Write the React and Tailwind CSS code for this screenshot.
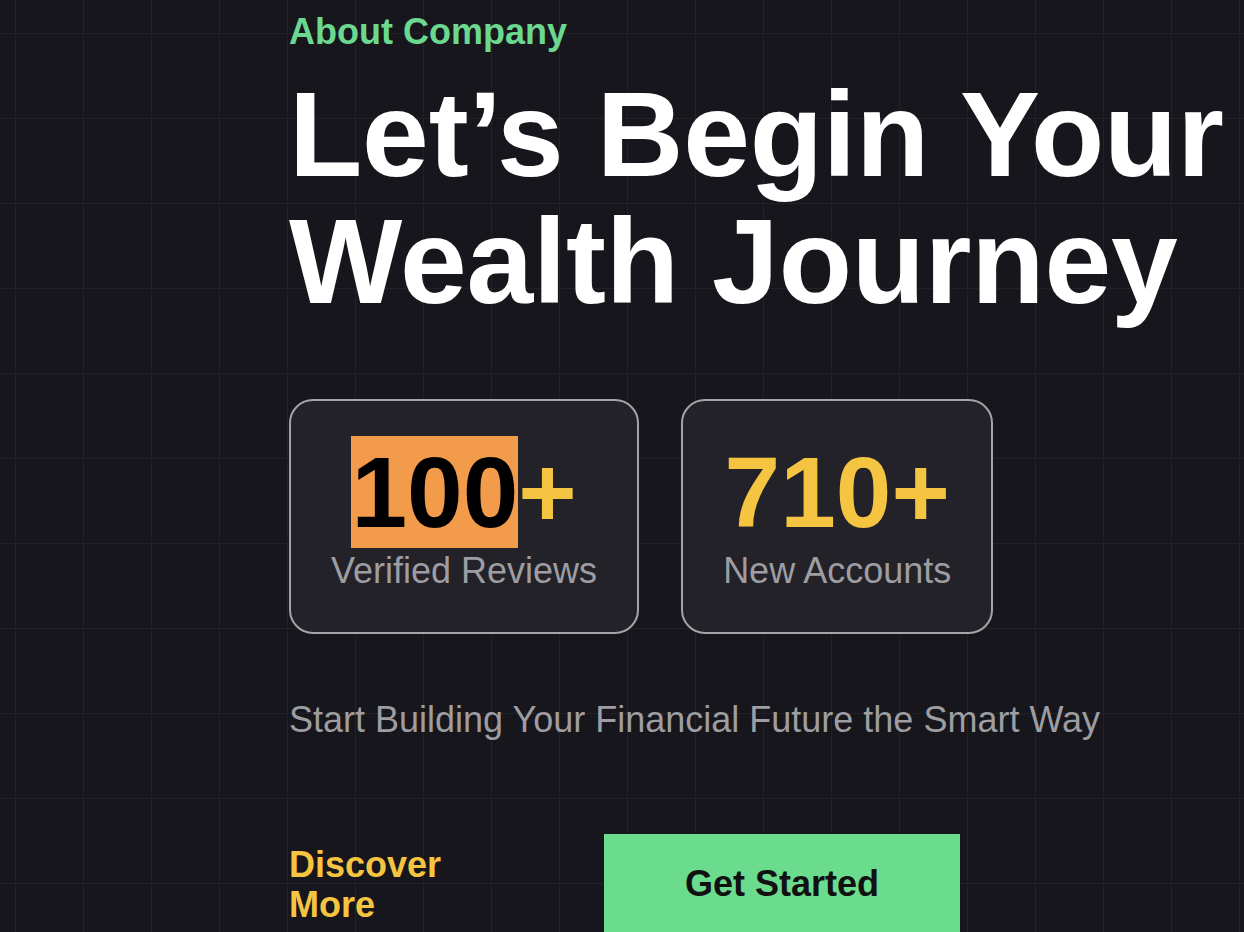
import React from 'react';

const stats = [
  { value: '100', label: 'Verified Reviews', marked: true },
  { value: '710', label: 'New Accounts', marked: false },
];

const StatCard = ({ value, label, marked }) => (
  <div className="h-[235px] rounded-[24px] border-2 border-[#a3a3a8] bg-[#232228] px-[40px] pt-[34px] flex flex-col items-center">
    <div className="text-[100px] font-bold leading-[1.15] text-[#f5c542]">
      {marked ? <span className="bg-[#f19b4b] text-black">{value}</span> : value}+
    </div>
    <div className="text-[36px] leading-[1.15] text-[#9d9da2] whitespace-nowrap">{label}</div>
  </div>
);

const App = () => {
  return (
    <div
      className="h-[932px] w-full overflow-hidden bg-[#17161c] bg-[linear-gradient(to_right,#222128_1px,transparent_1px),linear-gradient(to_bottom,#222128_1px,transparent_1px)] bg-[size:68px_85px] bg-[position:15px_33px] pl-[289px] pt-[12px]"
      style={{ fontFamily: '"Liberation Sans", Arial, Helvetica, sans-serif' }}
    >
      <p className="text-[36px] leading-[40px] font-bold text-[#6bd88f]">About Company</p>

      <h1 className="mt-[19px] text-[120px] leading-[127px] font-bold tracking-[-0.2px] text-white whitespace-nowrap">
        Let’s Begin Your
        <br />
        Wealth Journey
      </h1>

      <div className="mt-[74px] flex gap-[42px]">
        {stats.map((s) => (
          <StatCard key={s.label} {...s} />
        ))}
      </div>

      <p className="mt-[65px] text-[36px] leading-[1.15] text-[#9d9da2]">
        Start Building Your Financial Future the Smart Way
      </p>

      <div className="mt-[94px] flex items-start gap-[115px]">
        <a href="#" className="mt-[11px] w-[200px] text-[36px] leading-[40px] font-bold text-[#f5c542]">
          Discover More
        </a>
        <button className="h-[100px] w-[356px] bg-[#6bdb8d] text-[36px] font-bold text-[#111111]">
          Get Started
        </button>
      </div>
    </div>
  );
};

export default App;
